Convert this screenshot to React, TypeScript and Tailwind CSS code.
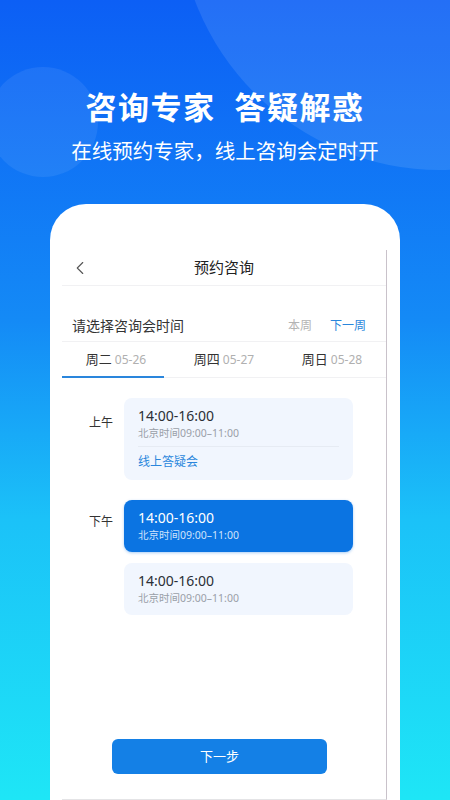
import { ChevronLeft } from 'lucide-react'

const font = { fontFamily: '"Noto Sans", "Noto Sans CJK SC", sans-serif' }

const days = [
  { name: '周二', date: '05-26', active: true },
  { name: '周四', date: '05-27' },
  { name: '周日', date: '05-28' },
]

function SlotCard({ active = false, tag }: { active?: boolean; tag?: string }) {
  return (
    <div
      className={
        active
          ? 'w-[229px] rounded-[8px] bg-[#0b74e2] pl-[14px] pt-[8px] pb-[10px] shadow-[0_1px_3px_rgba(11,116,226,0.35)]'
          : 'w-[229px] rounded-[8px] bg-[#f1f6fe] pl-[14px] pt-[8px] pb-[10px]'
      }
    >
      <p className={active ? 'text-[14px] leading-[20px] text-white' : 'text-[14px] leading-[20px] text-[#2b2f36]'}>
        14:00-16:00
      </p>
      <p className={active ? 'text-[10.5px] leading-[14px] text-[#cfe3fb]' : 'text-[10.5px] leading-[14px] text-[#9aa0a8]'}>
        北京时间09:00–11:00
      </p>
      {tag && (
        <>
          <div className="mr-[14px] mt-[6px] h-px bg-[#e6ebf3]" />
          <p className="mt-[7px] text-[12px] leading-[16px] text-[#2a86dc]">{tag}</p>
        </>
      )}
    </div>
  )
}

export default function App() {
  return (
    <div
      style={font}
      className="relative flex h-[800px] w-[450px] flex-col overflow-hidden bg-[linear-gradient(180deg,#0c5ff5_0%,#148af6_40%,#1bc2f8_65%,#1ee6f6_100%)]"
    >
      <div className="absolute left-[178px] top-[-354px] h-[524px] w-[524px] rounded-full bg-white/10" />
      <div className="absolute left-[-12px] top-[67px] h-[110px] w-[110px] rounded-full bg-white/[0.07]" />

      <div className="relative pt-[87px] text-center text-white">
        <h1 className="text-[31px] font-bold leading-[40px] tracking-[1.5px]">咨询专家&nbsp;&nbsp;答疑解惑</h1>
        <p className="mt-[10px] text-[20.5px] leading-[28px]">在线预约专家，线上咨询会定时开</p>
      </div>

      <div className="relative ml-[50px] mt-[39px] flex w-[350px] flex-1 flex-col rounded-t-[36px] bg-white pt-[46px]">
        <div className="ml-[12px] flex w-[325px] flex-1 flex-col border-b border-r border-b-[#e4e4e6] border-r-[#c9c2ca]">
          <div className="relative flex h-[36px] items-center justify-center border-b border-[#f1f1f3]">
            <ChevronLeft className="absolute left-[7px] h-[22px] w-[22px] text-[#555]" strokeWidth={1.2} />
            <span className="text-[15px] text-[#222]">预约咨询</span>
          </div>

          <div className="mt-[24px] flex h-[32px] items-center justify-between border-b border-[#f1f1f3] pl-[10px] pr-[20px]">
            <span className="text-[14px] text-[#333]">请选择咨询会时间</span>
            <div className="flex gap-[18px] text-[12px]">
              <span className="text-[#b4b4b4]">本周</span>
              <span className="text-[#2a86dc]">下一周</span>
            </div>
          </div>

          <div className="grid h-[36px] grid-cols-3 border-b border-[#f1f1f3]">
            {days.map((d) => (
              <div key={d.name} className="relative flex items-center justify-center gap-[3px]">
                <span className="text-[13px] text-[#333]">{d.name}</span>
                <span className="text-[12px] text-[#b0b0b0]">{d.date}</span>
                {d.active && <div className="absolute bottom-[-1px] left-0 h-[2px] w-[102px] bg-[#2a86dc]" />}
              </div>
            ))}
          </div>

          <div className="mt-[20px] flex pl-[27px]">
            <span className="mt-[17px] w-[35px] text-[12px] leading-[16px] text-[#333]">上午</span>
            <SlotCard tag="线上答疑会" />
          </div>

          <div className="mt-[20px] flex pl-[27px]">
            <span className="mt-[14px] w-[35px] text-[12px] leading-[16px] text-[#333]">下午</span>
            <div className="flex flex-col gap-[11px]">
              <SlotCard active />
              <SlotCard />
            </div>
          </div>

          <button className="mb-[25px] ml-[50px] mt-auto flex h-[35px] w-[215px] items-center justify-center rounded-[6px] bg-[#1480e6] text-[13px] text-white">
            下一步
          </button>
        </div>
      </div>
    </div>
  )
}
